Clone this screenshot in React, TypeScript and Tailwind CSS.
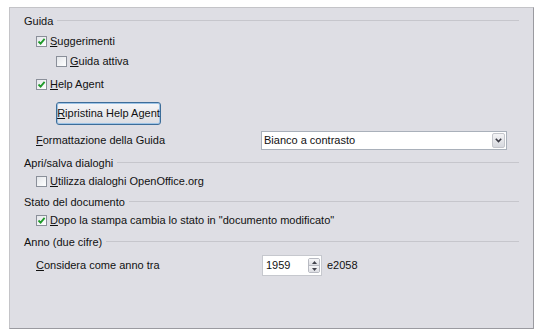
const font = { fontFamily: '"Liberation Sans", Arial, sans-serif' };

function Mn({ c, rest }: { c: string; rest: string }) {
  return (
    <span>
      <span className="underline underline-offset-[1px]">{c}</span>
      {rest}
    </span>
  );
}

function Check({ checked }: { checked?: boolean }) {
  return (
    <span className="flex h-[11px] w-[11px] shrink-0 items-center justify-center border border-[#8a8f99] bg-gradient-to-br from-[#e4e6ea] to-white">
      {checked && (
        <svg width="9" height="9" viewBox="0 0 9 9">
          <path d="M1.5 4.5 L3.6 6.6 L7.6 1.8" fill="none" stroke="#1f9a2a" strokeWidth="1.8" />
        </svg>
      )}
    </span>
  );
}

function Header({ title, className }: { title: string; className?: string }) {
  return (
    <div className={"flex h-4 items-center gap-[4px] " + (className ?? "")}>
      <span className="whitespace-nowrap">{title}</span>
      <div className="h-[2px] flex-1 border-t border-[#c6c6cc] border-b-white" />
    </div>
  );
}

function CheckRow({
  c,
  rest,
  checked,
  className,
}: {
  c: string;
  rest: string;
  checked?: boolean;
  className?: string;
}) {
  return (
    <div className={"flex h-4 items-center gap-[3px] " + (className ?? "")}>
      <Check checked={checked} />
      <Mn c={c} rest={rest} />
    </div>
  );
}

export default function App() {
  return (
    <div className="h-[332px] w-[548px] bg-white pl-[9px] pt-[7px] text-[11px] text-[#111]" style={font}>
      <div className="flex h-[322px] w-[525px] flex-col border border-t-[#c4c4c8] border-l-[#c4c4c8] border-r-[#9a9aa0] border-b-[#9a9aa0] bg-[#dedee4] pl-[14px] pr-[14px] pt-[5px]">
        <Header title="Guida" />
        <CheckRow c="S" rest="uggerimenti" checked className="ml-[12px] mt-[4px]" />
        <CheckRow c="G" rest="uida attiva" className="ml-[32px] mt-[4px]" />
        <CheckRow c="H" rest="elp Agent" checked className="ml-[12px] mt-[7px]" />
        <div className="ml-[32px] mt-[10px]">
          <button className="h-[23px] w-[105px] whitespace-nowrap rounded-[3px] border border-[#3d6d99] bg-gradient-to-b from-[#f6f6f8] to-[#dcdde2] text-[11px] text-[#111] shadow-[inset_0_0_0_1px_#9cc3e6]">
            <Mn c="R" rest="ipristina Help Agent" />
          </button>
        </div>
        <div className="ml-[12px] mt-[5px] flex h-[20px] items-center">
          <span className="w-[225px]">
            <Mn c="F" rest="ormattazione della Guida" />
          </span>
          <div className="flex h-[19px] w-[246px] items-center border border-[#a9b0ba] bg-white pl-[2px] pr-[1px]">
            <span className="flex-1">Bianco a contrasto</span>
            <span className="flex h-[15px] w-[13px] items-center justify-center rounded-[2px] border border-[#c4c6cc] bg-gradient-to-b from-[#f4f4f6] to-[#d6d8de]">
              <svg width="7" height="5" viewBox="0 0 7 5">
                <path d="M0.8 0.8 L3.5 3.6 L6.2 0.8" fill="none" stroke="#3a3a44" strokeWidth="1.6" />
              </svg>
            </span>
          </div>
        </div>
        <Header title="Apri/salva dialoghi" className="mt-[5px]" />
        <CheckRow c="U" rest="tilizza dialoghi OpenOffice.org" className="ml-[12px] mt-[2px]" />
        <Header title="Stato del documento" className="mt-[5px]" />
        <CheckRow
          c="D"
          rest={'opo la stampa cambia lo stato in "documento modificato"'}
          checked
          className="ml-[12px] mt-[2px]"
        />
        <Header title="Anno (due cifre)" className="mt-[6px]" />
        <div className="ml-[12px] mt-[5px] flex h-[21px] items-center">
          <span className="w-[226px]">
            <Mn c="C" rest="onsidera come anno tra" />
          </span>
          <div className="flex h-[21px] w-[60px] items-center border border-[#c6c8ce] bg-white pl-[3px] pr-[1px]">
            <span className="flex-1">1959</span>
            <span className="flex h-[15px] w-[12px] flex-col overflow-hidden rounded-[2px] border border-[#b8bac2]">
              <span className="flex flex-1 items-center justify-center border-b border-[#b8bac2] bg-gradient-to-b from-[#f6f6f8] to-[#dcdde2]">
                <svg width="5" height="3" viewBox="0 0 5 3">
                  <path d="M0 3 L2.5 0 L5 3 Z" fill="#40404a" />
                </svg>
              </span>
              <span className="flex flex-1 items-center justify-center bg-gradient-to-b from-[#f6f6f8] to-[#dcdde2]">
                <svg width="5" height="3" viewBox="0 0 5 3">
                  <path d="M0 0 L2.5 3 L5 0 Z" fill="#40404a" />
                </svg>
              </span>
            </span>
          </div>
          <span className="ml-[5px]">e2058</span>
        </div>
      </div>
    </div>
  );
}
